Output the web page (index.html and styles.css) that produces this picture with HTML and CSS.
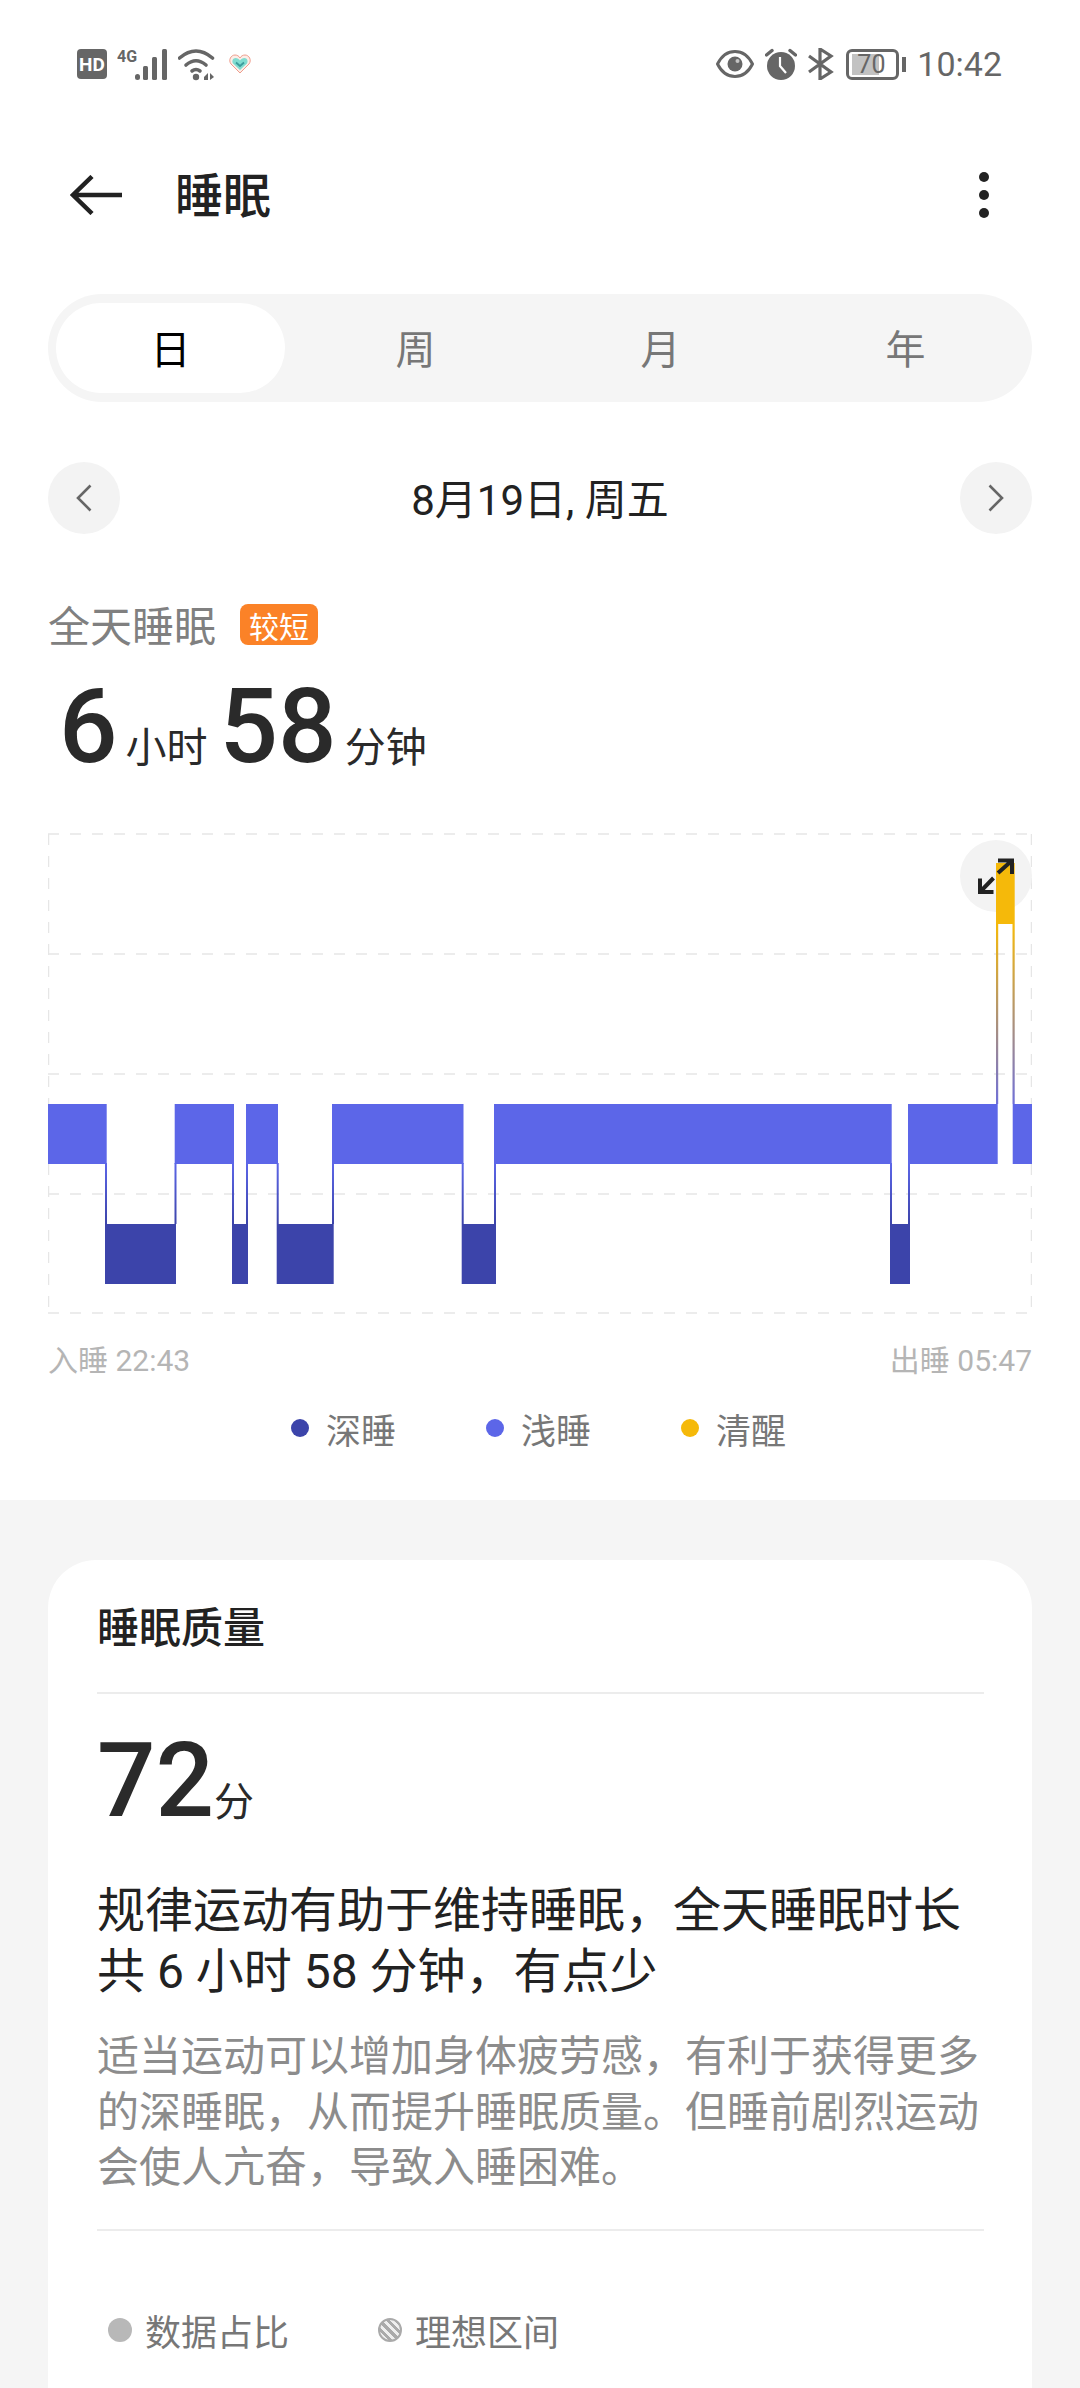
FILE: index.html
```html
<!DOCTYPE html>
<html lang="zh-CN">
<head>
    <meta name="viewport" content="width=device-width, initial-scale=1">
    <title>睡眠</title>
    <link rel="stylesheet" href="styles.css">
</head>
<body>
<div class="page">
    <section class="top">
        <div class="statusbar">
            <div class="status-left">
                <svg class="ico-hd" width="30" height="30" viewBox="0 0 30 30">
                    <rect width="30" height="30" rx="4" fill="#666"/>
                    <text x="15" y="21.500" text-anchor="middle" class="hd-text">HD</text>
                </svg>
                <svg class="ico-signal" width="52" height="33" viewBox="0 0 52 33">
                    <text x="0" y="14" class="g-text">4G</text>
                    <rect x="18" y="26" width="5" height="6" rx="2.500" fill="#666"/>
                    <rect x="26" y="18" width="5" height="14" rx="1.500" fill="#666"/>
                    <rect x="35" y="9" width="5" height="23" rx="1.500" fill="#666"/>
                    <rect x="45" y="1" width="5" height="31" rx="1.500" fill="#666"/>
                </svg>
                <svg class="ico-wifi" width="37" height="33" viewBox="0 0 37 33">
                    <path d="M1.500 10 Q18 -4 34.500 10" fill="none" stroke="#666" stroke-width="3.600" stroke-linecap="round"/>
                    <path d="M8 17 Q18 8.500 28 17" fill="none" stroke="#666" stroke-width="3.600" stroke-linecap="round"/>
                    <path d="M14 23 Q18 20 22 23" fill="none" stroke="#666" stroke-width="3.600" stroke-linecap="round"/>
                    <circle cx="18" cy="29" r="3.200" fill="#666"/>
                    <path d="M26 29 L30 25 V32 H26 Z M32 25 L36 29 L32 32 Z" fill="#666"/>
                </svg>
                <svg class="ico-heart" width="22" height="20" viewBox="0 0 22 20">
                    <path d="M11 19 L2 10 C-1 6 2 1 6 1 C8 1 10 2 11 4 C12 2 14 1 16 1 C20 1 23 6 20 10 Z" fill="#fbeee8" stroke="#ef9c8c" stroke-width="1"/>
                    <path d="M11 16 L4 9.500 C2.500 7 4 4 6.500 4 C8.500 4 10 5 11 6.500 C12 5 13.500 4 15.500 4 C18 4 19.500 7 18 9.500 Z" fill="#7fdcd0"/>
                    <path d="M7 8.500 L11 12 L15 8.500" fill="none" stroke="#3c9c9c" stroke-width="1.800"/>
                </svg>
            </div>
            <div class="status-right">
                <svg class="ico-eye" width="38" height="28" viewBox="0 0 38 28">
                    <path d="M1.500 14 C6 5 13 1.500 19 1.500 C25 1.500 32 5 36.500 14 C32 23 25 26.500 19 26.500 C13 26.500 6 23 1.500 14 Z" fill="none" stroke="#666" stroke-width="3"/>
                    <circle cx="19" cy="14" r="7.500" fill="#666"/>
                    <circle cx="21.500" cy="11" r="2" fill="#c4c4c4"/>
                </svg>
                <svg class="ico-alarm" width="32" height="32" viewBox="0 0 32 32">
                    <circle cx="16" cy="18" r="14" fill="#666"/>
                    <path d="M1.500 7 L7 2.500 M30.500 7 L25 2.500" stroke="#666" stroke-width="3.400" stroke-linecap="round"/>
                    <path d="M15 9 V18 L21 25" fill="none" stroke="#fff" stroke-width="2.200"/>
                </svg>
                <svg class="ico-bt" width="26" height="32" viewBox="0 0 26 32">
                    <path d="M1 8 L23 24 L12 31 V1 L23 8 L1 24" fill="none" stroke="#666" stroke-width="3.200"/>
                </svg>
                <div class="battery">
                    <div class="battery-body">
                        <div class="battery-fill"></div>
                        <span class="battery-text">70</span>
                    </div>
                    <div class="battery-nub"></div>
                </div>
                <span class="clock">10:42</span>
            </div>
        </div>

        <div class="titlebar">
            <svg class="back" width="52" height="40" viewBox="0 0 52 40">
                <path d="M52 20 H3 M22 1.500 L3 20 L22 38.500" fill="none" stroke="#222" stroke-width="4.500"/>
            </svg>
            <h1 class="title">睡眠</h1>
            <div class="more">
                <span></span><span></span><span></span>
            </div>
        </div>

        <div class="tabs">
            <div class="tab active">日</div>
            <div class="tab">周</div>
            <div class="tab">月</div>
            <div class="tab">年</div>
        </div>

        <div class="date-row">
            <div class="round-btn">
                <svg width="16" height="28" viewBox="0 0 16 28"><path d="M14.500 1.500 L2 14 L14.500 26.500" fill="none" stroke="#666" stroke-width="2.600"/></svg>
            </div>
            <div class="date">8月19日, 周五</div>
            <div class="round-btn">
                <svg width="16" height="28" viewBox="0 0 16 28"><path d="M1.500 1.500 L14 14 L1.500 26.500" fill="none" stroke="#666" stroke-width="2.600"/></svg>
            </div>
        </div>

        <div class="summary-label">
            <span class="label-text">全天睡眠</span>
            <span class="badge">较短</span>
        </div>
        <div class="duration">
            <span class="big">6</span><span class="unit">小时</span><span class="big">58</span><span class="unit">分钟</span>
        </div>

        <svg class="chart" width="984" height="490" viewBox="48 830 984 490">
            <defs>
                <linearGradient id="stem" gradientUnits="userSpaceOnUse" x1="0" y1="1163" x2="0" y2="1224">
                    <stop offset="0" stop-color="#5c66e8"/>
                    <stop offset="1" stop-color="#3c44aa"/>
                </linearGradient>
                <linearGradient id="awake" gradientUnits="userSpaceOnUse" x1="0" y1="924" x2="0" y2="1104">
                    <stop offset="0" stop-color="#f5b90a"/>
                    <stop offset="1" stop-color="#6f70d8"/>
                </linearGradient>
            </defs>

            <!-- grid -->
            <g class="grid">
                <line x1="48" y1="834" x2="1032" y2="834"/>
                <line x1="48" y1="954" x2="1032" y2="954"/>
                <line x1="48" y1="1074" x2="1032" y2="1074"/>
                <line x1="48" y1="1194" x2="1032" y2="1194"/>
                <line x1="48" y1="1313" x2="1032" y2="1313"/>
                <line x1="48.500" y1="834" x2="48.500" y2="1313"/>
                <line x1="1031.500" y1="834" x2="1031.500" y2="1313"/>
            </g>

            <circle cx="996" cy="876" r="36" fill="#f3f3f3"/>

            <!-- light sleep -->
            <g fill="#5c66e8">
                <rect x="48" y="1104" width="58.700" height="60"/>
                <rect x="174.700" y="1104" width="59.300" height="60"/>
                <rect x="246" y="1104" width="32" height="60"/>
                <rect x="332" y="1104" width="131.500" height="60"/>
                <rect x="494" y="1104" width="397.700" height="60"/>
                <rect x="908" y="1104" width="89.700" height="60"/>
                <rect x="1012.700" y="1104" width="19.300" height="60"/>
            </g>

            <!-- stems between stages -->
            <g fill="url(#stem)">
                <rect x="105" y="1163" width="2" height="61"/>
                <rect x="174.500" y="1163" width="2" height="61"/>
                <rect x="232" y="1163" width="2" height="61"/>
                <rect x="246" y="1163" width="2" height="61"/>
                <rect x="276.700" y="1163" width="2" height="61"/>
                <rect x="332" y="1163" width="2" height="61"/>
                <rect x="461.700" y="1163" width="2" height="61"/>
                <rect x="494" y="1163" width="2" height="61"/>
                <rect x="890" y="1163" width="2" height="61"/>
                <rect x="908" y="1163" width="2" height="61"/>
            </g>

            <!-- deep sleep -->
            <g fill="#3c44aa">
                <rect x="105" y="1224" width="71" height="60"/>
                <rect x="232" y="1224" width="16" height="60"/>
                <rect x="276.700" y="1224" width="57" height="60"/>
                <rect x="461.700" y="1224" width="34.300" height="60"/>
                <rect x="890" y="1224" width="20" height="60"/>
            </g>

            <!-- awake -->
            <rect x="996" y="863" width="18.700" height="61" fill="#f5b90a"/>
            <rect x="996" y="924" width="2.200" height="180" fill="url(#awake)"/>
            <rect x="1012.500" y="924" width="2.200" height="180" fill="url(#awake)"/>

            <path d="M998 860.500 H1012 V874 M1012 860.500 L998 873 M993.500 892 H980 V878.500 M980 892 L993.500 878" fill="none" stroke="#222" stroke-width="4"/>
        </svg>

        <div class="times">
            <span>入睡 22:43</span>
            <span>出睡 05:47</span>
        </div>

        <div class="legend">
            <div class="legend-item"><i class="dot deep"></i>深睡</div>
            <div class="legend-item"><i class="dot light"></i>浅睡</div>
            <div class="legend-item"><i class="dot awake"></i>清醒</div>
        </div>
    </section>

    <section class="rest">
        <div class="card">
            <div class="card-title">睡眠质量</div>
            <div class="score">
                <span class="big">72</span><span class="score-unit">分</span>
            </div>
            <p class="headline">规律运动有助于维持睡眠，全天睡眠时长共 6 小时 58 分钟，有点少</p>
            <p class="advice">适当运动可以增加身体疲劳感，有利于获得更多的深睡眠，从而提升睡眠质量。但睡前剧烈运动会使人亢奋，导致入睡困难。</p>
            <div class="ratio">
                <div class="ratio-item"><i class="swatch"></i>数据占比</div>
                <div class="ratio-item"><i class="swatch hatched"></i>理想区间</div>
            </div>
        </div>
    </section>
</div>
</body>
</html>
```

FILE: styles.css
```css
* {
    box-sizing: border-box;
}

body {
    margin: 0;
    background-color: #fff;
    font-family: Roboto, "Noto Sans CJK SC", sans-serif;
    color: #222;
}

.page {
    width: 1080px;
    height: 2388px;
    overflow: hidden;
    background-color: #f5f5f5;
}

.top {
    height: 1500px;
    padding: 0 48px;
    background-color: #fff;
}

/* status bar */
.statusbar {
    height: 128px;
    margin: 0 -48px;
    padding: 0 78px 0 77px;
    display: flex;
    align-items: center;
    justify-content: space-between;
}

.status-left, .status-right {
    display: flex;
    align-items: center;
}

.ico-signal {
    margin-left: 10px;
}

.ico-wifi {
    margin-left: 9px;
}

.ico-heart {
    margin-left: 14px;
}

.hd-text {
    font-size: 19px;
    font-weight: 700;
    fill: #fff;
}

.g-text {
    font-size: 16px;
    font-weight: 700;
    fill: #666;
}

.ico-alarm {
    margin-left: 11px;
}

.ico-bt {
    margin-left: 11px;
}

.battery {
    margin-left: 12px;
    display: flex;
    align-items: center;
}

.battery-body {
    width: 53px;
    height: 31px;
    border: 3px solid #666;
    border-radius: 6px;
    position: relative;
    padding: 2px 3px;
}

.battery-fill {
    width: 27px;
    height: 21px;
    background-color: #c2c2c2;
}

.battery-text {
    position: absolute;
    left: 8px;
    top: 0;
    font-size: 25px;
    line-height: 25px;
    color: #666;
}

.battery-nub {
    width: 4px;
    height: 15px;
    margin-left: 3px;
    background-color: #666;
}

.clock {
    margin-left: 11px;
    font-size: 34px;
    color: #666;
}

/* title */
.titlebar {
    height: 134px;
    margin-left: 22px;
    display: flex;
    align-items: center;
}

.title {
    margin: 0 0 6px 53px;
    font-size: 48px;
    font-weight: 500;
}

.more {
    margin-left: auto;
    margin-right: 43px;
    display: flex;
    flex-direction: column;
    gap: 8px;
}

.more span {
    width: 10px;
    height: 10px;
    border-radius: 50%;
    background-color: #222;
}

/* tabs */
.tabs {
    height: 108px;
    margin-top: 32px;
    padding: 9px 0;
    display: flex;
    border-radius: 54px;
    background-color: #f5f5f5;
}

.tab {
    width: 245px;
    flex: none;
    padding-bottom: 3px;
    display: flex;
    align-items: center;
    justify-content: center;
    border-radius: 45px;
    font-size: 40px;
    color: #777;
}

.tab.active {
    width: 229px;
    margin: 0 8px;
    background-color: #fff;
    color: #000;
}

/* date */
.date-row {
    height: 72px;
    margin-top: 60px;
    display: flex;
    align-items: center;
    justify-content: space-between;
}

.round-btn {
    width: 72px;
    height: 72px;
    display: flex;
    align-items: center;
    justify-content: center;
    border-radius: 50%;
    background-color: #f3f3f3;
}

.date {
    padding-bottom: 3px;
    font-size: 42px;
    color: #222;
}

/* summary */
.summary-label {
    height: 52px;
    margin-top: 63px;
    display: flex;
    align-items: center;
}

.label-text {
    font-size: 42px;
    color: #808080;
}

.badge {
    margin: 3px 0 0 24px;
    width: 78px;
    height: 41px;
    display: flex;
    align-items: center;
    justify-content: center;
    border-radius: 8px;
    background-color: #fb8227;
    color: #fff;
    font-size: 30px;
}

.duration {
    height: 110px;
    margin: 23px 0 0 11px;
    display: flex;
    align-items: baseline;
}

.big {
    font-size: 103px;
    line-height: 110px;
    font-weight: 500;
    color: #2a2a2a;
}

.unit {
    margin: 0 12px 0 8px;
    font-size: 41px;
    color: #2a2a2a;
}

/* chart */
.chart {
    display: block;
    margin-top: 48px;
}

.grid line {
    stroke: #e6e6e6;
    stroke-width: 1.500;
    stroke-dasharray: 11 11;
}

.times {
    height: 40px;
    margin-top: 18px;
    display: flex;
    align-items: center;
    justify-content: space-between;
    font-size: 30px;
    color: #b5b5b5;
}

.legend {
    height: 50px;
    margin-top: 25px;
    padding-left: 243px;
    display: flex;
    align-items: center;
}

.legend-item {
    width: 195px;
    display: flex;
    align-items: center;
    gap: 17px;
    font-size: 35px;
    color: #777;
}

.dot {
    width: 18px;
    height: 18px;
    border-radius: 50%;
}

.dot.deep {
    background-color: #3c44aa;
}

.dot.light {
    background-color: #5c66e8;
}

.dot.awake {
    background-color: #f5b90a;
}

/* card */
.rest {
    padding: 60px 48px 0;
}

.card {
    height: 900px;
    padding: 0 48px 0 49px;
    border-radius: 48px;
    background-color: #fff;
}

.card-title {
    height: 134px;
    padding-bottom: 3px;
    display: flex;
    align-items: center;
    border-bottom: 2px solid #ececec;
    font-size: 42px;
    font-weight: 500;
}

.score {
    height: 110px;
    margin-top: 32px;
    display: flex;
    align-items: baseline;
}

.score-unit {
    font-size: 40px;
    color: #2a2a2a;
}

.headline {
    margin: 44px 0 0;
    font-size: 48px;
    line-height: 61px;
    color: #222;
}

.advice {
    margin: 27px 0 0;
    padding-bottom: 33px;
    border-bottom: 2px solid #ececec;
    font-size: 42px;
    line-height: 55.500px;
    color: #8c8c8c;
}

.ratio {
    margin: 73px 0 0 11px;
    display: flex;
    align-items: center;
}

.ratio-item {
    width: 270px;
    display: flex;
    align-items: center;
    gap: 13px;
    font-size: 36px;
    color: #777;
}

.swatch {
    width: 24px;
    height: 24px;
    border-radius: 50%;
    background-color: #b8b8b8;
}

.swatch.hatched {
    border: 2px solid #aaa;
    background: repeating-linear-gradient(45deg, #aaa 0, #aaa 3px, #eee 3px, #eee 6px);
}
```
